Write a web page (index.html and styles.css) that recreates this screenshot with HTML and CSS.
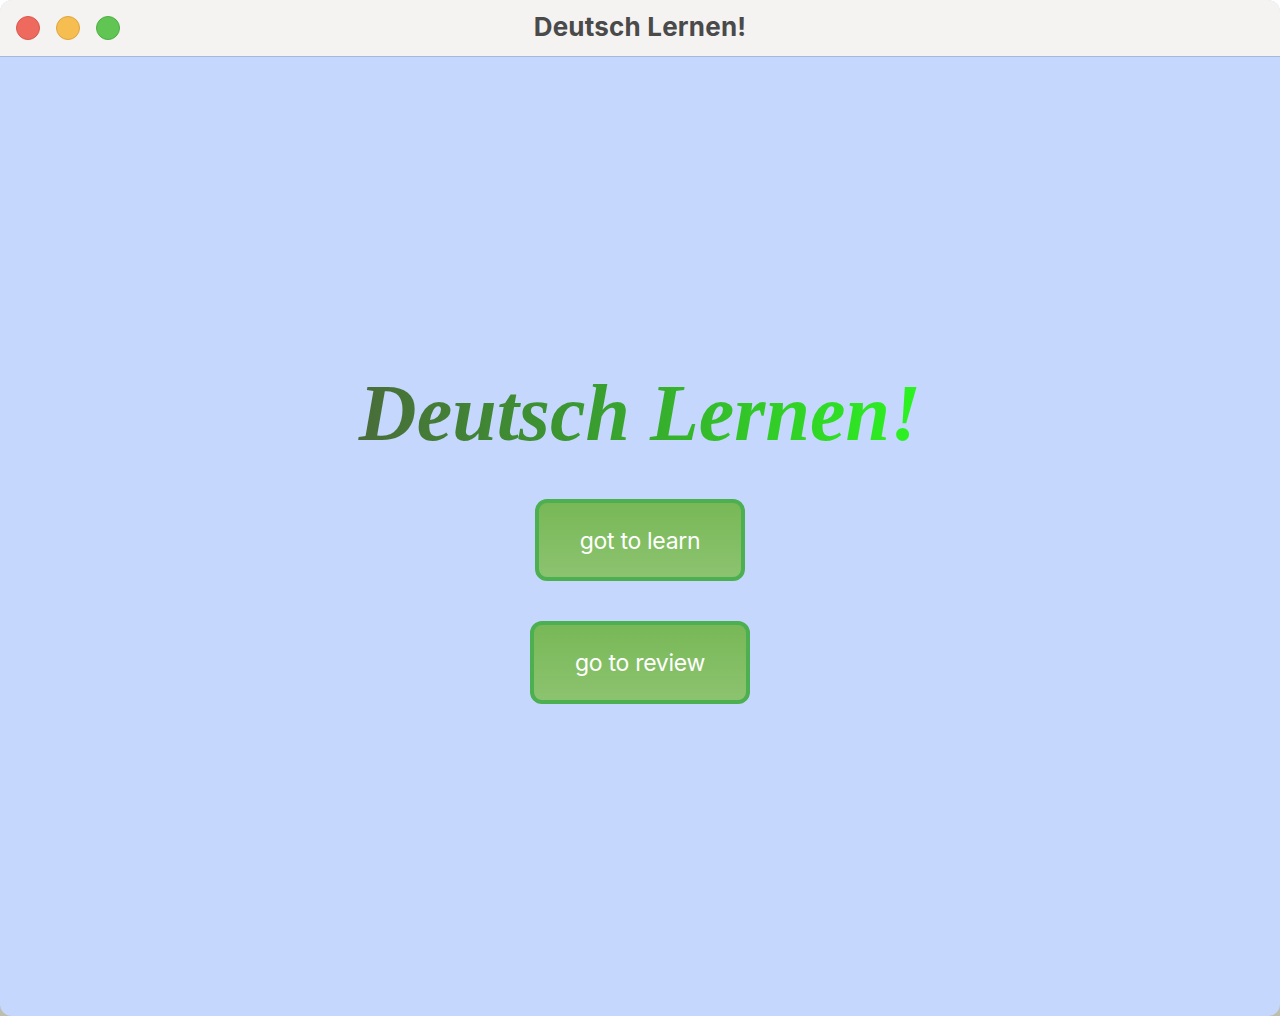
FILE: index.html
```html
<!DOCTYPE html>
<html>
<head>
<meta charset="utf-8">
<link rel="stylesheet" href="styles.css">
</head>
<body>
<div class="window">
  <header class="titlebar">
    <div class="lights">
      <span class="light red"></span>
      <span class="light yellow"></span>
      <span class="light green"></span>
    </div>
    <div class="title">Deutsch Lernen!</div>
  </header>
  <main class="content">
    <h1 class="headline">Deutsch Lernen!</h1>
    <button class="btn btn-learn">got to learn</button>
    <button class="btn btn-review">go to review</button>
  </main>
</div>
</body>
</html>
```
FILE: styles.css
```css
html, body {
  margin: 0;
  padding: 0;
  height: 100%;
}
body {
  background: linear-gradient(#ffffff 0%, #ffffff 50%, #bdbdb0 100%);
  overflow: hidden;
}
.window {
  width: 1280px;
  height: 1016px;
  border-radius: 12px;
  overflow: hidden;
  display: flex;
  flex-direction: column;
  box-sizing: border-box;
  background: #c6d7fe;
}
.titlebar {
  height: 56px;
  flex: none;
  background: #f4f3f1;
  border-bottom: 1px solid #a8b8dc;
  position: relative;
  display: flex;
  align-items: center;
  justify-content: center;
}
.lights {
  position: absolute;
  left: 16px;
  top: 16px;
  display: flex;
  gap: 16px;
}
.light {
  width: 24px;
  height: 24px;
  border-radius: 50%;
  box-sizing: border-box;
}
.red { background: #ee6a5f; border: 1px solid #d9574d; }
.yellow { background: #f6be50; border: 1px solid #dea43c; }
.green { background: #61c554; border: 1px solid #4ead43; }
.title {
  font-family: Inter, "Open Sans", sans-serif;
  font-weight: 700;
  font-size: 26px;
  letter-spacing: 0.2px;
  color: #4a4a4a;
  margin-top: -4px;
}
.content {
  flex: 1;
  display: flex;
  flex-direction: column;
  align-items: center;
  padding-top: 310px;
}
.headline {
  margin: 0;
  font-family: "Liberation Serif", "Times New Roman", serif;
  font-style: italic;
  font-weight: 700;
  font-size: 80px;
  line-height: 92px;
  background: linear-gradient(90deg, #4a6a3a 0%, #3a9a30 40%, #2bf720 100%);
  -webkit-background-clip: text;
  background-clip: text;
  color: transparent;
  padding: 0 10px;
}
.btn {
  font-family: Inter, "Open Sans", sans-serif;
  font-size: 23px;
  font-weight: 400;
  color: #ffffff;
  border: 4px solid #4caf50;
  border-radius: 12px;
  background: linear-gradient(#78b857, #8cc36f);
  height: 82px;
  box-sizing: border-box;
  letter-spacing: -0.3px;
  padding-top: 2px;
  cursor: pointer;
}
.btn-learn {
  width: 210px;
  margin-top: 40px;
}
.btn-review {
  width: 220px;
  height: 83px;
  margin-top: 40px;
}
```
